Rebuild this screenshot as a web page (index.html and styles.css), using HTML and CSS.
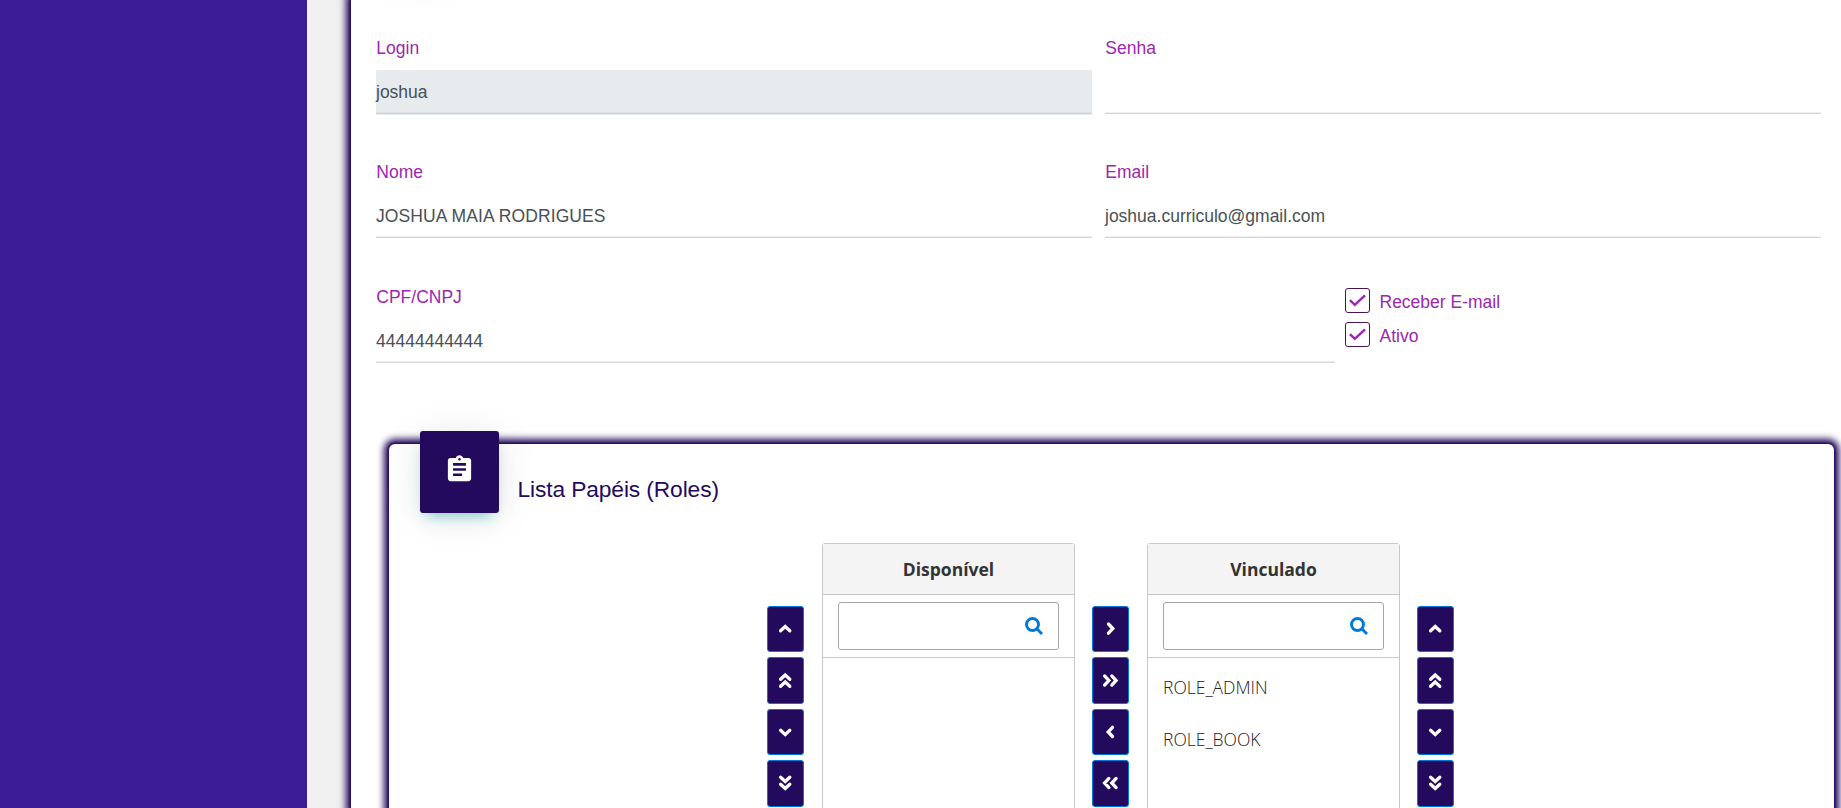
FILE: index.html
```
<!DOCTYPE html>
<html lang="pt-BR">
<head>
<meta charset="utf-8">
<title>Usuário</title>
<link rel="stylesheet" href="styles.css">
</head>
<body>
<svg class="defs" aria-hidden="true">
  <symbol id="up" viewBox="0 0 18 18"><path d="m4.600 10.800 4.600-4.300 4.600 4.300"/></symbol>
  <symbol id="down" viewBox="0 0 18 18"><path d="m4.600 7.300 4.600 4.300 4.600-4.300"/></symbol>
  <symbol id="right" viewBox="0 0 18 18"><path d="m7.500 4 4.300 4.600-4.300 4.600"/></symbol>
  <symbol id="left" viewBox="0 0 18 18"><path d="m11.500 4.300-4.300 4.600 4.300 4.600"/></symbol>
  <symbol id="up2" viewBox="0 0 18 18"><path d="m4.600 7.300 4.600-4.300 4.600 4.300M4.600 14.300l4.600-4.300 4.600 4.300"/></symbol>
  <symbol id="down2" viewBox="0 0 18 18"><path d="m4.600 3.200 4.600 4.300 4.600-4.300M4.600 10.200l4.600 4.300 4.600-4.300"/></symbol>
  <symbol id="right2" viewBox="0 0 18 18"><path d="m3.600 3.900L7.900 8.500l-4.300 4.600M10.800 3.900 15.100 8.500l-4.300 4.600"/></symbol>
  <symbol id="left2" viewBox="0 0 18 18"><path d="M7.900 4.400 3.600 9l4.300 4.600M15.100 4.400 10.800 9l4.300 4.600"/></symbol>
  <symbol id="search" viewBox="0 0 18 18"><circle cx="7.500" cy="7.500" r="6"/><path d="m11.800 11.800 5.200 5.200"/></symbol>
  <symbol id="check" viewBox="0 0 17 13"><path d="m.900 6.200 4.900 4.600L16 1.300"/></symbol>
</svg>
<div class="page">
  <aside class="sidebar"></aside>
  <main class="card">
    <div class="card-icon card-icon-top"></div>
    <form class="form">
      <div class="row">
        <div class="field"><label>Login</label><div class="input disabled">joshua</div></div>
        <div class="field"><label>Senha</label><div class="input"></div></div>
      </div>
      <div class="row row-names">
        <div class="field"><label>Nome</label><div class="input upper">JOSHUA MAIA RODRIGUES</div></div>
        <div class="field"><label>Email</label><div class="input">joshua.curriculo@gmail.com</div></div>
      </div>
      <div class="row row-checks">
        <div class="field"><label>CPF/CNPJ</label><div class="input">44444444444</div></div>
        <div class="checks">
          <div class="check"><span class="box"><svg><use href="#check"/></svg></span><span class="check-label">Receber E-mail</span></div>
          <div class="check"><span class="box"><svg><use href="#check"/></svg></span><span class="check-label">Ativo</span></div>
        </div>
      </div>
    </form>
    <section class="roles">
      <header class="roles-header">
        <div class="card-icon">
          <svg viewBox="0 0 24 24"><path d="M19 3h-4.180C14.400 1.840 13.300 1 12 1s-2.400.840-2.820 2H5c-1.100 0-2 .900-2 2v14c0 1.100.900 2 2 2h14c1.100 0 2-.900 2-2V5c0-1.100-.900-2-2-2zm-7 0c.550 0 1 .450 1 1s-.450 1-1 1-1-.450-1-1 .450-1 1-1zm2 14H7v-2h7v2zm3-4H7v-2h10v2zm0-4H7V7h10v2z"/></svg>
        </div>
        <h4>Lista Papéis (Roles)</h4>
      </header>
      <div class="picklist">
        <div class="buttons">
          <button><svg><use href="#up"/></svg></button>
          <button><svg><use href="#up2"/></svg></button>
          <button><svg><use href="#down"/></svg></button>
          <button><svg><use href="#down2"/></svg></button>
        </div>
        <div class="panel">
          <div class="caption">Disponível</div>
          <div class="filter"><div class="search"><svg><use href="#search"/></svg></div></div>
        </div>
        <div class="buttons">
          <button><svg><use href="#right"/></svg></button>
          <button><svg><use href="#right2"/></svg></button>
          <button><svg><use href="#left"/></svg></button>
          <button><svg><use href="#left2"/></svg></button>
        </div>
        <div class="panel">
          <div class="caption">Vinculado</div>
          <div class="filter"><div class="search"><svg><use href="#search"/></svg></div></div>
          <ul>
            <li>ROLE_ADMIN</li>
            <li>ROLE_BOOK</li>
          </ul>
        </div>
        <div class="buttons">
          <button><svg><use href="#up"/></svg></button>
          <button><svg><use href="#up2"/></svg></button>
          <button><svg><use href="#down"/></svg></button>
          <button><svg><use href="#down2"/></svg></button>
        </div>
      </div>
    </section>
  </main>
</div>
</body>
</html>
```
FILE: styles.css
```
* { box-sizing: border-box; }

body {
  margin: 0;
  height: 808px;
  overflow: hidden;
  background: #f0f0f0;
  font: 17.5px/26px "Liberation Sans", Arial, sans-serif;
  color: #495057;
}

.defs { display: none; }

.page { display: flex; height: 808px; overflow: hidden; }

.sidebar { flex: none; width: 307px; background: #3b1c96; }

.card {
  flex: none;
  width: 1510px;
  margin-left: 44px;
  padding: 0 0 0 25px;
  background: #fff;
  box-shadow: 30px 0 0 #fff, 0 0 7px 5px #230a5d, 0 0 2px 1px #230a5d;
}

.card-icon {
  flex: none;
  display: flex;
  justify-content: center;
  width: 79px;
  height: 82px;
  padding-top: 23px;
  border-radius: 3px;
  background: #230a5d;
  box-shadow: 0 4px 40px rgba(0, 0, 0, .09), 0 8px 14px -6px rgba(0, 160, 170, .5);
}
.card-icon svg { width: 31px; height: 31px; fill: #fff; }
.card-icon-top { margin: -102px 0 4px 6px; box-shadow: 0 4px 28px rgba(0, 0, 0, .1); }

.form { width: 1445px; padding-top: 51px; }

.row {
  display: grid;
  grid-template-columns: 716px 716px;
  column-gap: 13px;
  height: 124px;
}
.row-names { height: 125px; }
.row-checks { grid-template-columns: 959px 1fr; column-gap: 10px; }

label { display: block; height: 35px; padding-left: .3px; color: #9c27b0; }

.input {
  height: 45px;
  line-height: 44px;
  background: linear-gradient(#f0f0f0 50%, #d6d6d6 50%) 0 42px / 100% 2px no-repeat;
}
.disabled {
  background: #e7ebee linear-gradient(#dde1e3 50%, #d0d3d6 50%) 0 42px / 100% 2px no-repeat;
}
.upper { letter-spacing: .1px; }

.checks { display: flex; flex-direction: column; gap: 9px; padding-top: 4px; color: #9c27b0; }
.check { display: flex; align-items: center; gap: 9.5px; height: 25px; }
.check-label { padding-top: 2px; }
.box {
  display: flex;
  width: 25px;
  height: 25px;
  padding: 5px 0 0 3px;
  border: 1px solid #4a1259;
  border-radius: 3px;
}
.box svg { flex: none; width: 17px; height: 13px; fill: none; stroke: #9c27b0; stroke-width: 2.5; overflow: visible; }

.roles {
  width: 1445px;
  height: 500px;
  margin: 36px 0 0 13px;
  border-radius: 6px;
  background: #fff;
  box-shadow: 0 0 7px 5px #230a5d, 0 0 2px 1px #230a5d;
}
.roles-header { display: flex; gap: 19px; height: 99px; padding-left: 31px; }
.roles-header .card-icon { margin-top: -13px; }
.roles-header h4 {
  margin: 31px 0 0 -.5px;
  font-size: 22.75px;
  font-weight: 400;
  line-height: 28px;
  letter-spacing: -.11px;
  color: #230a5d;
}

.picklist {
  display: flex;
  justify-content: center;
  gap: 17px;
  padding-right: 2px;
  font-family: "Open Sans", sans-serif;
}

.buttons {
  display: flex;
  flex-direction: column;
  gap: 5px;
  width: 38px;
  padding-top: 63px;
}
.buttons button {
  display: flex;
  align-items: center;
  justify-content: center;
  width: 37px;
  height: 46.4px;
  padding: 0;
  border: 1px solid #007ad9;
  border-radius: 3px;
  background: #230a5d;
}
.buttons svg { width: 18px; height: 18px; fill: none; stroke: #fff; stroke-width: 3.3; stroke-linecap: round; }

.panel {
  width: 253px;
  height: 420px;
  border: 1px solid #c8c8c8;
  border-radius: 3px 3px 0 0;
  color: #333;
}
.caption {
  height: 51px;
  padding-left: 1px;
  border-bottom: 1px solid #c8c8c8;
  background: #f4f4f4;
  font-weight: 700;
  line-height: 51px;
  text-align: center;
}
.filter { height: 63px; padding: 7px 15px; border-bottom: 1px solid #c8c8c8; }
.search {
  display: flex;
  justify-content: flex-end;
  height: 48px;
  padding: 14px 15px 0 0;
  border: 1px solid #a6a6a6;
  border-radius: 3px;
}
.search svg { width: 18px; height: 18px; fill: none; stroke: #007ad9; stroke-width: 2.9; }
ul { margin: 0; padding: 3px 0 0 15.5px; list-style: none; }
li { height: 52px; line-height: 52px; font-weight: 300; color: #222; }
```
